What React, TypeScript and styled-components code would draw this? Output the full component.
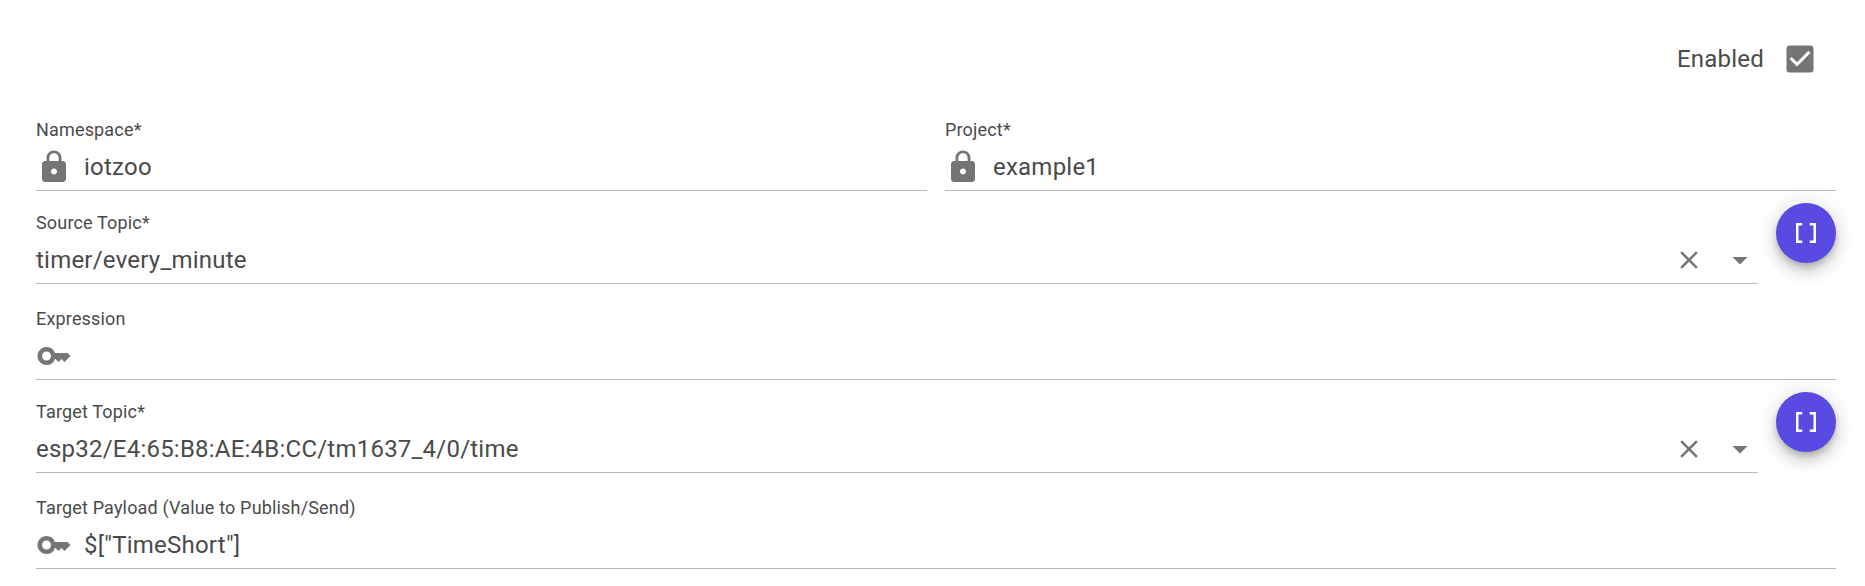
import React from 'react';
import styled, { createGlobalStyle } from 'styled-components';
import {
  MdArrowDropDown,
  MdCheckBox,
  MdClose,
  MdDataArray,
  MdKey,
  MdLock,
} from 'react-icons/md';

const GlobalStyle = createGlobalStyle`
  *, *::before, *::after { box-sizing: border-box; }
  body {
    margin: 0;
    background: #fff;
    color: #4a4a4a;
    font-family: Roboto, "Liberation Sans", sans-serif;
  }
`;

const Form = styled.form`
  display: flex;
  flex-direction: column;
  padding: 41px 29px 0 36px;
`;

const EnabledRow = styled.label`
  display: flex;
  align-items: center;
  justify-content: flex-end;
  gap: 18px;
  height: 36px;
  margin-bottom: 42px;
  padding-right: 18px;
  font-size: 24px;
  line-height: 36px;
  letter-spacing: 0.225px;

  svg { color: #757575; }
`;

const Columns = styled.div`
  display: grid;
  grid-template-columns: 1fr 1fr;
  gap: 18px;
`;

const TopicRow = styled.div`
  display: flex;
  align-items: flex-start;
  gap: 18px;
  margin: 12px 0 24px;
`;

const FieldBox = styled.div<{ $offset?: number }>`
  flex: 1 0 auto;
  display: flex;
  flex-direction: column;
  height: 72px;
  margin-top: ${({ $offset = 0 }) => $offset}px;
  border-bottom: 1px solid #bababa;
`;

const FieldLabel = styled.div`
  height: 24px;
  padding-top: 2px;
  font-size: 18px;
  line-height: 18px;
  letter-spacing: 0.169px;
  white-space: nowrap;
`;

const FieldBody = styled.div`
  display: flex;
  align-items: center;
  height: 47px;
  padding-top: 1px;
`;

const Adornment = styled.span`
  display: flex;
  margin-right: 12px;
  color: #757575;
`;

const Value = styled.span`
  flex: 1;
  font-size: 24px;
  line-height: 28px;
  letter-spacing: 0.225px;
`;

const Actions = styled.span`
  display: flex;
  align-items: center;
  gap: 18px;
  color: #757575;
`;

const Fab = styled.button`
  display: flex;
  align-items: center;
  justify-content: center;
  width: 60px;
  height: 60px;
  padding: 0;
  border: 0;
  border-radius: 50%;
  background: #594ae2;
  color: #fff;
  box-shadow:
    0 4.5px 7.5px -1.5px rgba(0, 0, 0, 0.2),
    0 9px 15px 0 rgba(0, 0, 0, 0.14),
    0 1.5px 27px 0 rgba(0, 0, 0, 0.12);
`;

interface FieldProps {
  label: string;
  value?: string;
  icon?: React.ReactNode;
  select?: boolean;
  offset?: number;
}

function Field({ label, value, icon, select, offset }: FieldProps) {
  return (
    <FieldBox $offset={offset}>
      <FieldLabel>{label}</FieldLabel>
      <FieldBody>
        {icon && <Adornment>{icon}</Adornment>}
        <Value>{value}</Value>
        {select && (
          <Actions>
            <MdClose size={30} />
            <MdArrowDropDown size={36} />
          </Actions>
        )}
      </FieldBody>
    </FieldBox>
  );
}

function TopicField({ label, value }: { label: string; value: string }) {
  return (
    <TopicRow>
      <Field label={label} value={value} select offset={9} />
      <Fab type="button">
        <MdDataArray size={30} />
      </Fab>
    </TopicRow>
  );
}

export default function App() {
  return (
    <>
      <GlobalStyle />
      <Form>
        <EnabledRow>
          Enabled
          <MdCheckBox size={36} />
        </EnabledRow>
        <Columns>
          <Field label="Namespace*" value="iotzoo" icon={<MdLock size={36} />} />
          <Field label="Project*" value="example1" icon={<MdLock size={36} />} />
        </Columns>
        <TopicField label="Source Topic*" value="timer/every_minute" />
        <Field label="Expression" icon={<MdKey size={36} />} />
        <TopicField label="Target Topic*" value="esp32/E4:65:B8:AE:4B:CC/tm1637_4/0/time" />
        <Field
          label="Target Payload (Value to Publish/Send)"
          value={'$["TimeShort"]'}
          icon={<MdKey size={36} />}
        />
      </Form>
    </>
  );
}
